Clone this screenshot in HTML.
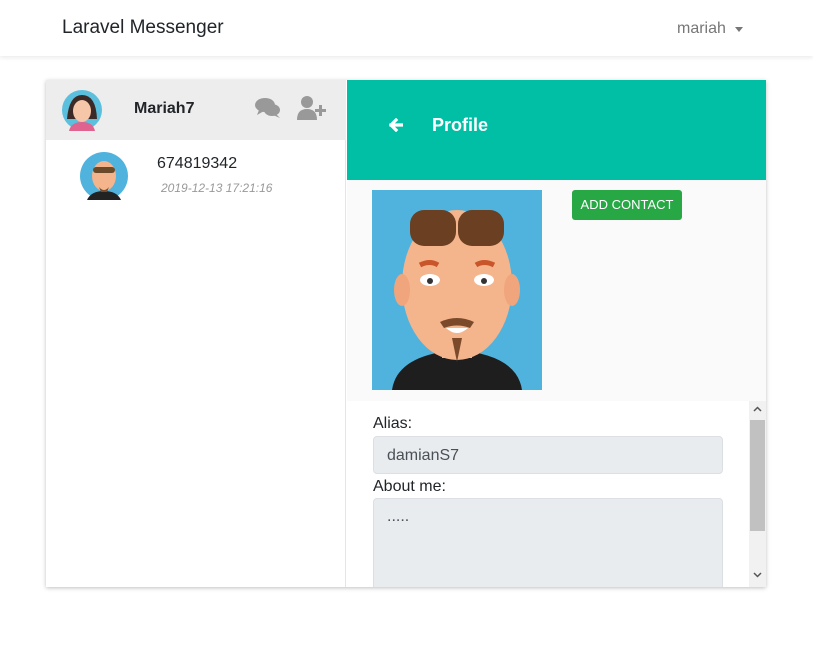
<!DOCTYPE html>
<html><head><meta charset="utf-8"><style>
*{box-sizing:border-box;margin:0;padding:0}
body{width:813px;height:663px;background:#fff;font-family:"Liberation Sans",sans-serif;position:relative;overflow:hidden;color:#212529}
.nav{position:absolute;left:0;top:0;width:813px;height:56px;background:#fff;box-shadow:0 2px 4px rgba(0,0,0,.08)}
.brand{position:absolute;left:62px;top:17px;font-size:19px;color:#212529}
.user{position:absolute;left:677px;top:20px;font-size:16px;color:#777}
.caret{position:absolute;left:735px;top:27px;border-left:4.5px solid transparent;border-right:4.5px solid transparent;border-top:5px solid #777}
.card{position:absolute;left:46px;top:80px;width:720px;height:507px;box-shadow:0 1px 4px rgba(0,0,0,.25);background:#fff;overflow:hidden}
.left{position:absolute;left:0;top:0;width:300px;height:507px;border-right:1px solid #e5e5e5}
.lh{position:absolute;left:0;top:0;width:300px;height:60px;background:#ededed}
.right{position:absolute;left:301px;top:0;width:419px;height:507px;background:#fafafa}
.rh{position:absolute;left:0;top:0;width:419px;height:100px;background:#00bfa5}
.btn{position:absolute;left:225px;top:110px;width:110px;height:30px;background:#28a745;color:#fff;font-size:13px;line-height:30px;text-align:center;border-radius:3px}
.form{position:absolute;left:0;top:321px;width:419px;height:186px;background:#fff}
.lbl{position:absolute;left:26px;font-size:16px;color:#212529}
.inp{position:absolute;left:26px;width:350px;background:#e9ecef;border:1px solid #dcdfe3;border-radius:4px;color:#495057;font-size:16px;padding-left:13px}
.sb{position:absolute;left:402px;top:0;width:17px;height:186px;background:#f1f1f1}
</style></head><body>
<div class="nav"><div class="brand">Laravel Messenger</div><div class="user">mariah</div><div class="caret"></div></div>
<div class="card">
 <div class="left">
  <div class="lh">
   <svg style="position:absolute;left:15px;top:9px" width="42" height="42" viewBox="0 0 42 42"><circle cx="21" cy="21" r="20" fill="#5bc0de"/><path d="M6 30 Q8 6 21 6 Q35 6 36 30 Z" fill="#3b2a25"/><ellipse cx="21" cy="22" rx="9" ry="11" fill="#f6c6a8"/><path d="M8 42 Q10 33 21 33 Q32 33 34 42Z" fill="#e0638f"/></svg>
   <div style="position:absolute;left:88px;top:20px;font-weight:bold;font-size:16px">Mariah7</div>
   <svg style="position:absolute;left:209px;top:17px" width="26" height="22" viewBox="0 0 26 22"><ellipse cx="10" cy="8" rx="10" ry="7" fill="#999"/><path d="M4 13 L2 18 L9 14Z" fill="#999"/><ellipse cx="17" cy="13" rx="8" ry="6" fill="#999"/><path d="M21 17 L25 21 L18 18Z" fill="#999"/></svg>
   <svg style="position:absolute;left:251px;top:16px" width="30" height="24" viewBox="0 0 30 24"><circle cx="10" cy="6" r="6" fill="#999"/><path d="M0 24 Q0 13 10 13 Q20 13 20 24Z" fill="#999"/><rect x="18" y="13" width="11" height="3" fill="#999"/><rect x="22" y="9" width="3" height="11" fill="#999"/></svg>
  </div>
  <svg style="position:absolute;left:33px;top:71px" width="50" height="50" viewBox="0 0 50 50"><circle cx="25" cy="25" r="24" fill="#4fb3de"/><ellipse cx="25" cy="25" rx="12" ry="15" fill="#f4b48c"/><rect x="14" y="16" width="22" height="6" rx="3" fill="#6b4a2a"/><path d="M8 49 Q12 40 25 40 Q38 40 42 49Z" fill="#222"/><path d="M20 36 Q25 42 30 36 L28 41 L22 41Z" fill="#7a4a2a"/></svg>
  <div style="position:absolute;left:111px;top:75px;font-size:16px">674819342</div>
  <div style="position:absolute;left:115px;top:101px;font-size:12px;font-style:italic;color:#999">2019-12-13 17:21:16</div>
 </div>
 <div class="right">
  <div class="rh">
   <svg style="position:absolute;left:42px;top:38px" width="14" height="14" viewBox="0 0 14 14"><path d="M7 2 L2 7 L7 12 M2 7 H13" stroke="#fff" stroke-width="3.2" fill="none" stroke-linecap="square"/></svg>
   <div style="position:absolute;left:85px;top:35px;color:#fff;font-weight:bold;font-size:18px">Profile</div>
  </div>
  <svg style="position:absolute;left:25px;top:110px" width="170" height="200" viewBox="0 0 170 200"><rect width="170" height="200" fill="#4fb3de"/><path d="M20 200 Q25 165 85 160 Q145 165 150 200Z" fill="#1e1e1e"/><rect x="70" y="140" width="30" height="28" fill="#f4b48c"/><ellipse cx="85" cy="95" rx="55" ry="75" fill="#f4b48c"/><ellipse cx="30" cy="100" rx="8" ry="16" fill="#f0a57c"/><ellipse cx="140" cy="100" rx="8" ry="16" fill="#f0a57c"/><rect x="38" y="20" width="46" height="36" rx="14" fill="#6b3f22"/><rect x="86" y="20" width="46" height="36" rx="14" fill="#6b3f22"/><path d="M48 75 Q58 70 66 75 M104 75 Q112 70 122 75" stroke="#c9562a" stroke-width="5" fill="none"/><ellipse cx="58" cy="90" rx="10" ry="6" fill="#fff"/><ellipse cx="112" cy="90" rx="10" ry="6" fill="#fff"/><circle cx="58" cy="91" r="3" fill="#333"/><circle cx="112" cy="91" r="3" fill="#333"/><path d="M68 132 Q85 124 102 132 L98 138 Q85 133 72 138Z" fill="#7a4a2a"/><path d="M74 138 Q85 148 96 138Z" fill="#fff"/><path d="M80 148 L90 148 L85 172Z" fill="#7a4a2a"/></svg>
  <div class="btn">ADD CONTACT</div>
  <div class="form">
   <div class="lbl" style="top:14px">Alias:</div>
   <div class="inp" style="top:35px;height:38px;line-height:38px">damianS7</div>
   <div class="lbl" style="top:77px">About me:</div>
   <div class="inp" style="top:97px;height:100px;padding-top:8px;line-height:20px">.....</div>
   <div class="sb"><div style="position:absolute;top:19px;left:1px;width:15px;height:111px;background:#c1c1c1"></div>
    <svg style="position:absolute;top:5px;left:4px" width="9" height="6" viewBox="0 0 9 6"><path d="M1 5 L4.5 1.5 L8 5" stroke="#555" stroke-width="1.5" fill="none"/></svg>
    <svg style="position:absolute;top:171px;left:4px" width="9" height="6" viewBox="0 0 9 6"><path d="M1 1 L4.5 4.5 L8 1" stroke="#555" stroke-width="1.5" fill="none"/></svg></div>
  </div>
 </div>
</div>
</body></html>
